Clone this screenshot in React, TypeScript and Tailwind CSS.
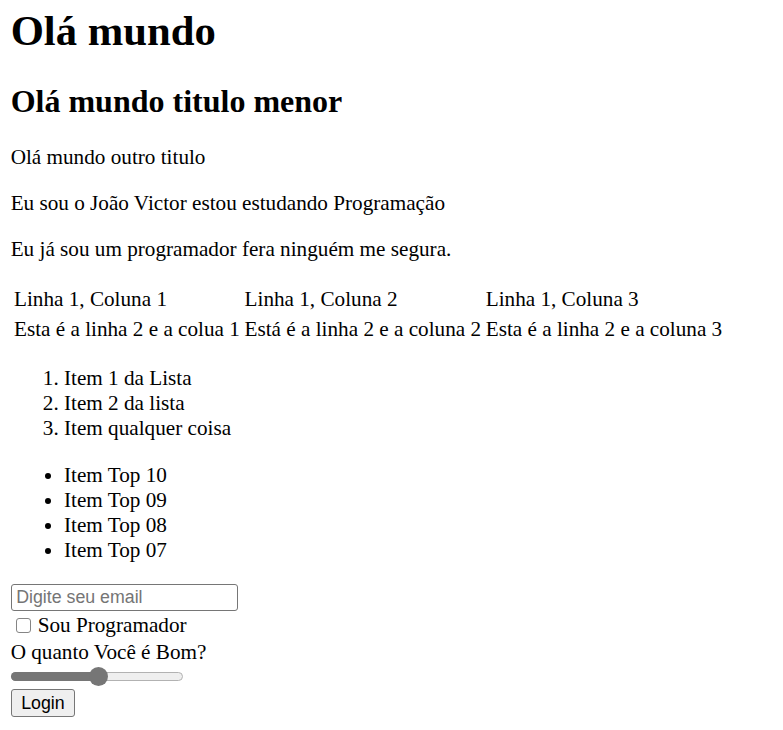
export default function App() {
  return (
    <div className="min-h-screen bg-white px-[10.67px] text-[21.2px] leading-[25px] text-black font-['Liberation_Serif','Times_New_Roman',serif]">
      <h1 className="pt-[5.5px] text-[42.67px] font-bold leading-[49px]">Olá mundo</h1>
      <h2 className="mt-[28.44px] text-[32px] font-bold leading-[37px]">Olá mundo titulo menor</h2>
      <p className="mt-[24.8px]">Olá mundo outro titulo</p>
      <p className="mt-[21.33px]">Eu sou o João Victor estou estudando Programação</p>
      <p className="mt-[21.33px]">Eu já sou um programador fera ninguém me segura.</p>

      <table className="mt-[21.33px] border-separate border-spacing-[2.67px]">
        <tbody>
          <tr>
            <td className="p-[1.33px]">Linha 1, Coluna 1</td>
            <td className="p-[1.33px]">Linha 1, Coluna 2</td>
            <td className="p-[1.33px]">Linha 1, Coluna 3</td>
          </tr>
          <tr>
            <td className="p-[1.33px]">Esta é a linha 2 e a colua 1</td>
            <td className="p-[1.33px]">Está é a linha 2 e a coluna 2</td>
            <td className="p-[1.33px]">Esta é a linha 2 e a coluna 3</td>
          </tr>
        </tbody>
      </table>

      <ol className="my-[21.33px] list-decimal pl-[53.33px]">
        <li>Item 1 da Lista</li>
        <li>Item 2 da lista</li>
        <li>Item qualquer coisa</li>
      </ol>

      <ul className="mb-[21.33px] list-disc pl-[53.33px]">
        <li>Item Top 10</li>
        <li>Item Top 09</li>
        <li>Item Top 08</li>
        <li>Item Top 07</li>
      </ul>

      <form className="flex flex-col items-start" onSubmit={e => e.preventDefault()}>
        <input
          type="email"
          placeholder="Digite seu email"
          className="h-[26.5px] w-[227px] rounded-[3px] border border-[#767676] px-[4.5px] text-[17.78px] font-['Liberation_Sans',Arial,sans-serif] outline-none placeholder:text-[#757575]"
        />
        <label className="mt-[2px] flex h-[25px] items-center">
          <input
            type="checkbox"
            className="ml-[5.5px] mr-[6.5px] h-[15px] w-[15px] appearance-none rounded-[3px] border border-[#858585] bg-white"
          />
          Sou Programador
        </label>
        <label className="mt-[2.5px] h-[25px]">O quanto Você é Bom?</label>
        <div className="relative flex h-[23.5px] w-[172px] items-center">
          <div className="h-[9px] w-full rounded-full border border-[#b2b2b2] bg-[#efefef]" />
          <div className="absolute left-0 h-[9px] w-[88px] rounded-full bg-[#767676]" />
          <div className="absolute left-[78px] h-[19px] w-[19px] rounded-full bg-[#767676]" />
        </div>
        <button
          type="submit"
          className="h-[28.5px] rounded-[3px] border border-[#767676] bg-[#efefef] px-[9.5px] text-[17.78px] leading-[24px] font-['Liberation_Sans',Arial,sans-serif]"
        >
          Login
        </button>
      </form>
    </div>
  )
}
